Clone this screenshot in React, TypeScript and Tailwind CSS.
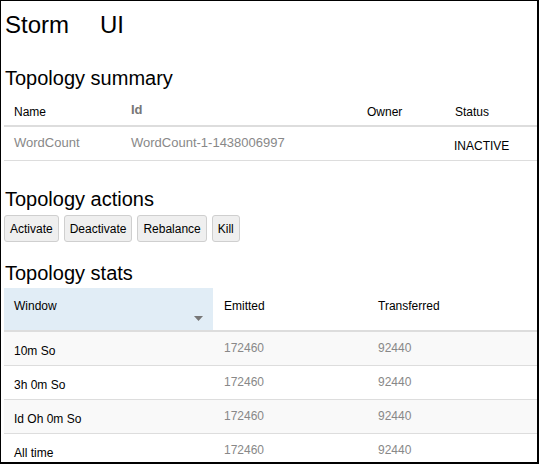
import React from "react";

const font = { fontFamily: '"Liberation Sans", Arial, sans-serif' };

const rows = [
  { w: "10m So", e: "172460", t: "92440" },
  { w: "3h 0m So", e: "172460", t: "92440" },
  { w: "Id Oh 0m So", e: "172460", t: "92440" },
  { w: "All time", e: "172460", t: "92440" },
];

export default function App() {
  return (
    <div
      style={font}
      className="w-[539px] h-[464px] overflow-hidden bg-white border-l border-t border-r-2 border-b-2 border-black pl-[3px] text-black"
    >
      <h1 className="mt-[10px] h-[28px] text-[24px] leading-[28px] flex gap-[31px] pl-[1px]">
        <span>Storm</span>
        <span>UI</span>
      </h1>

      <h2 className="mt-[27px] text-[20px] leading-[24px] pl-[1px]">Topology summary</h2>

      <div className="flex h-[37px] border-b-2 border-[#dddddd] text-[12px] leading-[14px]">
        <div className="w-[117px] pl-[10px] pt-[15px]">Name</div>
        <div className="w-[236px] pl-[10px] pt-[12px] text-[13px] leading-[15px] font-bold text-[#777777]">Id</div>
        <div className="w-[88px] pl-[10px] pt-[15px]">Owner</div>
        <div className="flex-1 pl-[10px] pt-[15px]">Status</div>
      </div>
      <div className="flex h-[34px] border-b border-[#dddddd] text-[13px] leading-[15px] text-[#888888]">
        <div className="w-[117px] pl-[10px] pt-[8px]">WordCount</div>
        <div className="w-[236px] pl-[10px] pt-[8px]">WordCount-1-1438006997</div>
        <div className="w-[88px] pl-[10px] pt-[8px]"></div>
        <div className="flex-1 pl-[9px] pt-[12px] text-[12px] leading-[14px] text-black">INACTIVE</div>
      </div>

      <h2 className="mt-[26px] text-[20px] leading-[24px] pl-[1px]">Topology actions</h2>
      <div className="mt-[4px] flex gap-[5px] text-[12px] leading-[14px]">
        {["Activate", "Deactivate", "Rebalance", "Kill"].map((b) => (
          <button
            key={b}
            style={font}
            className="h-[27px] px-[5px] pt-[1px] border border-[#cfcfcf] rounded-[3px] bg-[#efefef] text-black"
          >
            {b}
          </button>
        ))}
      </div>

      <h2 className="mt-[19px] text-[20px] leading-[24px] pl-[1px]">Topology stats</h2>
      <div className="mt-[3px] flex h-[44px] border-b-2 border-[#dddddd] text-[12px] leading-[14px]">
        <div className="relative w-[209px] bg-[#e1edf6] pl-[10px] pt-[11px]">
          Window
          <svg className="absolute left-[190px] top-[28px]" width="9" height="5" viewBox="0 0 9 5">
            <polygon points="0,0 9,0 4.5,5" fill="#777777" />
          </svg>
        </div>
        <div className="w-[154px] pl-[11px] pt-[11px]">Emitted</div>
        <div className="w-[86px] pl-[11px] pt-[11px]">Transferred</div>
        <div className="flex-1" />
      </div>
      {rows.map((r, i) => (
        <div
          key={i}
          className={`flex h-[34px] border-b border-[#dddddd] text-[12px] leading-[14px] ${
            i % 2 === 0 ? "bg-[#f9f9f9]" : "bg-white"
          }`}
        >
          <div className="w-[209px] pl-[10px] pt-[12px]">{r.w}</div>
          <div className="w-[154px] pl-[11px] pt-[9px] text-[#888888]">{r.e}</div>
          <div className="w-[86px] pl-[11px] pt-[9px] text-[#888888]">{r.t}</div>
          <div className="flex-1" />
        </div>
      ))}
    </div>
  );
}
